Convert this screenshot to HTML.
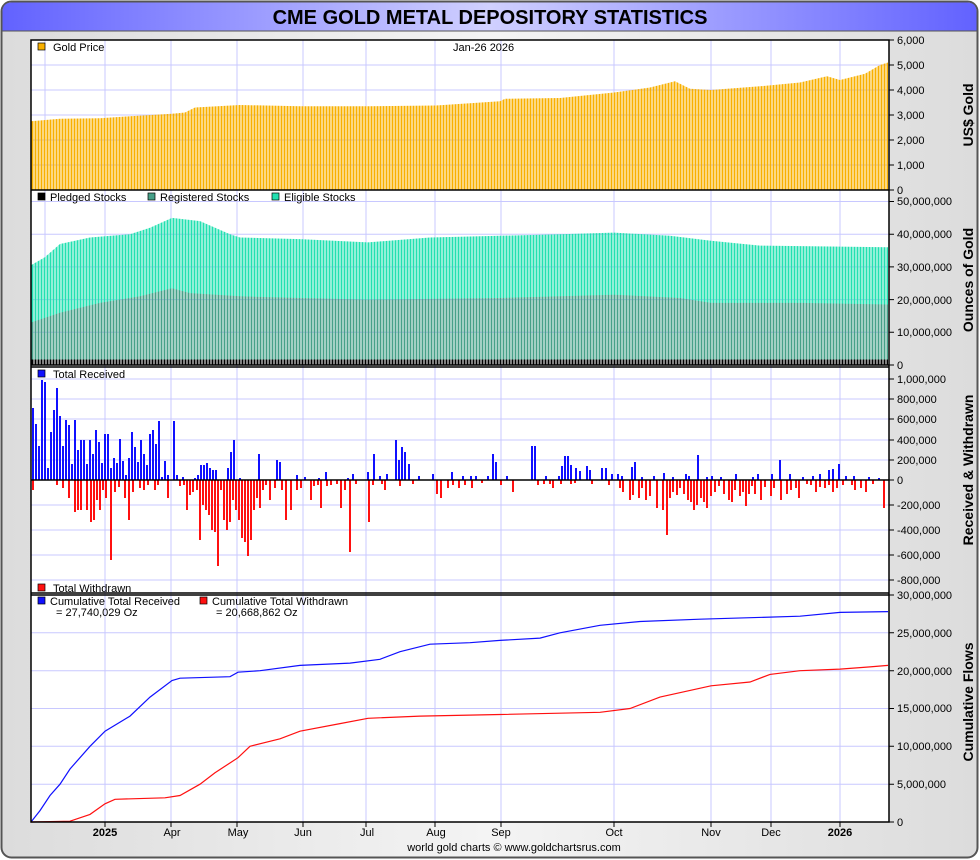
<!DOCTYPE html>
<html><head><meta charset="utf-8">
<style>
html,body{margin:0;padding:0;background:#fff;}
svg{display:block;font-family:"Liberation Sans",sans-serif;}
.t{font-size:11px;fill:#000;}
.ax text{font-size:11px;fill:#000;}
.at{font-size:14px;font-weight:bold;fill:#000;}
</style></head><body>
<svg width="980" height="860" viewBox="0 0 980 860" xmlns="http://www.w3.org/2000/svg">
<defs>
<linearGradient id="bg" x1="0" x2="1" y1="0" y2="0">
<stop offset="0" stop-color="#dcdcdc"/><stop offset="0.5" stop-color="#f4f4f4"/><stop offset="1" stop-color="#dcdcdc"/>
</linearGradient>
<linearGradient id="tb" x1="0" x2="1" y1="0" y2="0">
<stop offset="0" stop-color="#6262ff"/><stop offset="0.5" stop-color="#d0d0ff"/><stop offset="1" stop-color="#6262ff"/>
</linearGradient>
<pattern id="pg" x="31.5" y="0" width="3" height="10" patternUnits="userSpaceOnUse"><rect width="2" height="10" fill="#f8b000"/></pattern>
<pattern id="pe" x="31.5" y="0" width="3" height="10" patternUnits="userSpaceOnUse"><rect width="2" height="10" fill="#22e0b0"/></pattern>
<pattern id="pr" x="31.5" y="0" width="3" height="10" patternUnits="userSpaceOnUse"><rect width="2" height="10" fill="#46a088"/></pattern>
<pattern id="pk" x="31.5" y="0" width="3" height="10" patternUnits="userSpaceOnUse"><rect width="2" height="10" fill="#000"/></pattern>
</defs>
<rect x="1.5" y="1.5" width="976" height="856" rx="10" fill="url(#bg)" stroke="#555" stroke-width="2"/>
<path d="M2.5,31 L2.5,12 Q2.5,2.5 12,2.5 L967,2.5 Q976.5,2.5 976.5,12 L976.5,31 Z" fill="url(#tb)"/>
<line x1="2" y1="31" x2="977" y2="31" stroke="#555" stroke-width="1"/>
<text x="490" y="24" text-anchor="middle" style="font-size:20px;font-weight:bold">CME GOLD METAL DEPOSITORY STATISTICS</text>
<rect x="31" y="40" width="858" height="782" fill="#fff"/>
<g stroke="#c8c8ff" stroke-width="1">
<line x1="45" y1="40" x2="45" y2="365"/>
<line x1="105" y1="40" x2="105" y2="822"/><line x1="171" y1="40" x2="171" y2="822"/><line x1="237" y1="40" x2="237" y2="822"/>
<line x1="303" y1="40" x2="303" y2="822"/><line x1="366" y1="40" x2="366" y2="822"/><line x1="435" y1="40" x2="435" y2="822"/>
<line x1="501" y1="40" x2="501" y2="822"/><line x1="614" y1="40" x2="614" y2="822"/><line x1="711" y1="40" x2="711" y2="822"/>
<line x1="771" y1="40" x2="771" y2="822"/><line x1="840" y1="40" x2="840" y2="822"/>
<line x1="31" y1="165" x2="889" y2="165"/><line x1="31" y1="140" x2="889" y2="140"/><line x1="31" y1="115" x2="889" y2="115"/><line x1="31" y1="90" x2="889" y2="90"/><line x1="31" y1="65" x2="889" y2="65"/>
<line x1="31" y1="332.3" x2="889" y2="332.3"/><line x1="31" y1="299.6" x2="889" y2="299.6"/><line x1="31" y1="266.9" x2="889" y2="266.9"/><line x1="31" y1="234.2" x2="889" y2="234.2"/><line x1="31" y1="201.5" x2="889" y2="201.5"/>
<line x1="31" y1="379" x2="889" y2="379"/><line x1="31" y1="399" x2="889" y2="399"/><line x1="31" y1="419" x2="889" y2="419"/><line x1="31" y1="440" x2="889" y2="440"/><line x1="31" y1="460" x2="889" y2="460"/>
<line x1="31" y1="505" x2="889" y2="505"/><line x1="31" y1="530" x2="889" y2="530"/><line x1="31" y1="555" x2="889" y2="555"/><line x1="31" y1="580" x2="889" y2="580"/>
<line x1="31" y1="784.2" x2="889" y2="784.2"/><line x1="31" y1="746.3" x2="889" y2="746.3"/><line x1="31" y1="708.5" x2="889" y2="708.5"/><line x1="31" y1="670.7" x2="889" y2="670.7"/><line x1="31" y1="632.8" x2="889" y2="632.8"/>
</g>
<polygon fill="url(#pg)" points="31,190 31,121.25 60,118.75 100,118.25 130,116.25 172,113.75 185,112.5 195,107.5 240,105 300,106.25 368,106.25 436,105.5 500,101.25 505,98.75 560,98 614,92.5 650,87.5 675,81.25 690,88.75 711,90 760,86.25 800,82.5 827,76.25 840,80 865,73.75 880,65 888,62.5 888,190"/>
<polygon fill="url(#pe)" points="31,365 31,265.3 45,257.1 60,244 90,237.5 130,234.2 150,227.7 172,217.9 200,221.1 230,234.2 240,237.5 300,239.1 368,242.4 430,237.5 500,235.8 560,234.2 614,232.6 670,235.8 711,240.7 760,245.6 888,247.3 888,365"/>
<polygon fill="url(#pr)" points="31,365 31,322.5 60,312.7 100,302.9 140,296.3 172,288.2 190,293.1 240,296.3 300,298 368,299.6 500,298 614,294.7 680,298 711,302.9 800,302.9 888,304.5 888,365"/>
<rect x="31" y="359.5" width="857" height="5.5" fill="url(#pk)"/>
<path fill="#1010ff" d="M32,480v-72h2v72zM35,480v-56h2v56zM38,480v-34h2v34zM41,480v-100h2v100zM44,480v-98h2v98zM47,480v-12h2v12zM50,480v-48h2v48zM53,480v-70h2v70zM56,480v-92h2v92zM59,480v-64h2v64zM62,480v-34h2v34zM65,480v-60h2v60zM68,480v-55h2v55zM71,480v-16h2v16zM74,480v-60h2v60zM77,480v-30h2v30zM80,480v-40h2v40zM83,480v-40h2v40zM86,480v-16h2v16zM89,480v-40h2v40zM92,480v-26h2v26zM95,480v-50h2v50zM98,480v-38h2v38zM101,480v-17h2v17zM104,480v-46h2v46zM107,480v-46h2v46zM110,480v-12h2v12zM113,480v-22h2v22zM116,480v-17h2v17zM119,480v-41h2v41zM122,480v-19h2v19zM125,480v-5h2v5zM128,480v-22h2v22zM131,480v-48h2v48zM134,480v-33h2v33zM137,480v-18h2v18zM140,480v-40h2v40zM143,480v-26h2v26zM146,480v-15h2v15zM149,480v-46h2v46zM152,480v-50h2v50zM155,480v-36h2v36zM158,480v-59h2v59zM161,480v-3h2v3zM164,480v-19h2v19zM167,480v-5h2v5zM173,480v-59h2v59zM176,480v-5h2v5zM182,480v-3h2v3zM194,480v-2h2v2zM197,480v-5h2v5zM200,480v-15h2v15zM203,480v-15h2v15zM206,480v-17h2v17zM209,480v-12h2v12zM212,480v-10h2v10zM215,480v-10h2v10zM227,480v-12h2v12zM230,480v-28h2v28zM233,480v-40h2v40zM239,480v-2h2v2zM258,480v-26h2v26zM276,480v-20h2v20zM279,480v-18h2v18zM296,480v-5h2v5zM304,480v-3h2v3zM318,480v-2h2v2zM325,480v-8h2v8zM347,480v-2h2v2zM352,480v-6h2v6zM367,480v-8h2v8zM373,480v-26h2v26zM379,480v-4h2v4zM386,480v-6h2v6zM395,480v-40h2v40zM398,480v-20h2v20zM401,480v-33h2v33zM404,480v-28h2v28zM408,480v-16h2v16zM418,480v-4h2v4zM432,480v-6h2v6zM451,480v-8h2v8zM462,480v-4h2v4zM470,480v-4h2v4zM475,480v-4h2v4zM487,480v-4h2v4zM492,480v-26h2v26zM495,480v-18h2v18zM506,480v-4h2v4zM531,480v-34h2v34zM534,480v-34h2v34zM545,480v-4h2v4zM558,480v-4h2v4zM561,480v-14h2v14zM564,480v-24h2v24zM567,480v-24h2v24zM570,480v-15h2v15zM575,480v-12h2v12zM579,480v-9h2v9zM586,480v-14h2v14zM589,480v-10h2v10zM601,480v-12h2v12zM605,480v-12h2v12zM611,480v-6h2v6zM617,480v-6h2v6zM621,480v-4h2v4zM631,480v-13h2v13zM634,480v-18h2v18zM641,480v-3h2v3zM653,480v-4h2v4zM663,480v-7h2v7zM672,480v-3h2v3zM685,480v-6h2v6zM688,480v-4h2v4zM697,480v-25h2v25zM706,480v-3h2v3zM711,480v-4h2v4zM720,480v-3h2v3zM735,480v-6h2v6zM752,480v-3h2v3zM757,480v-6h2v6zM771,480v-6h2v6zM779,480v-20h2v20zM789,480v-6h2v6zM802,480v-3h2v3zM812,480v-4h2v4zM819,480v-6h2v6zM828,480v-10h2v10zM832,480v-11h2v11zM838,480v-16h2v16zM845,480v-4h2v4zM853,480v-4h2v4zM868,480v-3h2v3zM878,480v-2h2v2z"/>
<path fill="#ff1010" d="M32,480v10h2v-10zM56,480v5h2v-5zM62,480v8h2v-8zM68,480v18h2v-18zM74,480v32h2v-32zM77,480v30h2v-30zM80,480v30h2v-30zM86,480v30h2v-30zM90,480v42h2v-42zM93,480v40h2v-40zM96,480v20h2v-20zM99,480v30h2v-30zM102,480v10h2v-10zM105,480v18h2v-18zM110,480v80h2v-80zM114,480v12h2v-12zM118,480v7h2v-7zM124,480v18h2v-18zM128,480v40h2v-40zM132,480v12h2v-12zM139,480v8h2v-8zM143,480v10h2v-10zM147,480v5h2v-5zM154,480v10h2v-10zM157,480v5h2v-5zM167,480v18h2v-18zM179,480v6h2v-6zM183,480v5h2v-5zM186,480v30h2v-30zM189,480v15h2v-15zM192,480v12h2v-12zM196,480v10h2v-10zM199,480v60h2v-60zM202,480v25h2v-25zM205,480v30h2v-30zM208,480v35h2v-35zM211,480v50h2v-50zM214,480v52h2v-52zM217,480v86h2v-86zM220,480v10h2v-10zM223,480v40h2v-40zM226,480v50h2v-50zM229,480v42h2v-42zM232,480v20h2v-20zM235,480v30h2v-30zM238,480v40h2v-40zM241,480v58h2v-58zM244,480v62h2v-62zM247,480v76h2v-76zM250,480v60h2v-60zM253,480v30h2v-30zM256,480v18h2v-18zM259,480v28h2v-28zM262,480v10h2v-10zM265,480v5h2v-5zM269,480v20h2v-20zM274,480v8h2v-8zM281,480v10h2v-10zM285,480v40h2v-40zM290,480v30h2v-30zM296,480v10h2v-10zM300,480v8h2v-8zM310,480v20h2v-20zM313,480v6h2v-6zM317,480v5h2v-5zM320,480v28h2v-28zM326,480v6h2v-6zM330,480v5h2v-5zM336,480v4h2v-4zM340,480v28h2v-28zM344,480v10h2v-10zM349,480v72h2v-72zM355,480v4h2v-4zM368,480v42h2v-42zM372,480v5h2v-5zM381,480v4h2v-4zM384,480v10h2v-10zM399,480v6h2v-6zM412,480v4h2v-4zM436,480v14h2v-14zM440,480v18h2v-18zM447,480v8h2v-8zM452,480v5h2v-5zM458,480v8h2v-8zM464,480v5h2v-5zM471,480v8h2v-8zM481,480v3h2v-3zM500,480v5h2v-5zM512,480v12h2v-12zM537,480v5h2v-5zM543,480v4h2v-4zM549,480v4h2v-4zM552,480v8h2v-8zM560,480v4h2v-4zM570,480v4h2v-4zM574,480v3h2v-3zM591,480v4h2v-4zM608,480v5h2v-5zM619,480v8h2v-8zM622,480v12h2v-12zM629,480v20h2v-20zM632,480v15h2v-15zM638,480v18h2v-18zM641,480v8h2v-8zM645,480v20h2v-20zM649,480v16h2v-16zM656,480v28h2v-28zM662,480v30h2v-30zM666,480v55h2v-55zM669,480v18h2v-18zM672,480v12h2v-12zM676,480v15h2v-15zM679,480v8h2v-8zM683,480v14h2v-14zM687,480v20h2v-20zM690,480v22h2v-22zM693,480v30h2v-30zM696,480v25h2v-25zM700,480v18h2v-18zM703,480v22h2v-22zM706,480v28h2v-28zM710,480v16h2v-16zM714,480v12h2v-12zM718,480v6h2v-6zM723,480v14h2v-14zM728,480v20h2v-20zM731,480v22h2v-22zM734,480v10h2v-10zM739,480v16h2v-16zM742,480v12h2v-12zM745,480v26h2v-26zM748,480v14h2v-14zM751,480v6h2v-6zM754,480v14h2v-14zM760,480v20h2v-20zM764,480v7h2v-7zM770,480v16h2v-16zM773,480v8h2v-8zM780,480v20h2v-20zM786,480v14h2v-14zM790,480v10h2v-10zM795,480v8h2v-8zM798,480v18h2v-18zM806,480v4h2v-4zM810,480v5h2v-5zM815,480v12h2v-12zM819,480v7h2v-7zM824,480v8h2v-8zM828,480v5h2v-5zM832,480v12h2v-12zM836,480v8h2v-8zM842,480v5h2v-5zM851,480v5h2v-5zM854,480v10h2v-10zM860,480v8h2v-8zM865,480v12h2v-12zM872,480v4h2v-4zM883,480v28h2v-28z"/>
<polyline fill="none" stroke="#1010ff" stroke-width="1.2" points="31,822 40,810.6 50,795.5 60,784.2 70,769 90,746.3 105,731.2 130,716.1 150,697.1 172,680.5 180,678.2 230,676.7 238,672.2 260,670.7 300,665.4 350,663.1 380,659.3 400,651.7 430,644.2 470,642.7 500,640.4 540,638.1 560,632.8 600,625.3 640,621.5 700,619.2 800,616.2 840,612.4 888,611.6"/>
<polyline fill="none" stroke="#ff1010" stroke-width="1.2" points="31,822 70,821.2 90,814.4 105,803.8 115,799.3 165,797.8 180,795.5 200,784.2 215,772.8 238,757.7 250,746.3 280,738.8 300,731.2 340,723.6 368,718.3 420,716.1 500,714.5 600,712.3 630,708.5 660,697.1 711,685.8 750,682 770,674.4 800,670.7 840,669.1 870,666.9 888,665.4"/>
<g fill="none" stroke="#000" stroke-width="1.5">
<rect x="31" y="40" width="858" height="782"/>
<line x1="31" y1="190" x2="889" y2="190"/>
<line x1="31" y1="365" x2="889" y2="365"/>
<line x1="31" y1="367" x2="889" y2="367"/>
<line x1="31" y1="593" x2="889" y2="593"/>
<line x1="31" y1="595" x2="889" y2="595"/>
</g>
<line x1="31" y1="480" x2="889" y2="480" stroke="#000" stroke-width="1.5"/>
<g stroke="#000" stroke-width="1">
<path d="M889,190h5M889,165h5M889,140h5M889,115h5M889,90h5M889,65h5M889,40h5M889,365h5M889,332.3h5M889,299.6h5M889,266.9h5M889,234.2h5M889,201.5h5M889,379h5M889,399h5M889,419h5M889,440h5M889,460h5M889,480h5M889,505h5M889,530h5M889,555h5M889,580h5M889,822h5M889,784.2h5M889,746.3h5M889,708.5h5M889,670.7h5M889,632.8h5M889,595h5M105,822v5M171,822v5M237,822v5M303,822v5M366,822v5M435,822v5M501,822v5M614,822v5M711,822v5M771,822v5M840,822v5"/>
</g>
<g class="ax">
<text x="897" y="194">0</text><text x="897" y="169">1,000</text><text x="897" y="144">2,000</text><text x="897" y="119">3,000</text><text x="897" y="94">4,000</text><text x="897" y="69">5,000</text><text x="897" y="44">6,000</text>
<text x="897" y="369">0</text><text x="897" y="336">10,000,000</text><text x="897" y="304">20,000,000</text><text x="897" y="271">30,000,000</text><text x="897" y="238">40,000,000</text><text x="897" y="205">50,000,000</text>
<text x="897" y="383">1,000,000</text><text x="897" y="403">800,000</text><text x="897" y="423">600,000</text><text x="897" y="444">400,000</text><text x="897" y="464">200,000</text><text x="897" y="484">0</text><text x="897" y="509">-200,000</text><text x="897" y="534">-400,000</text><text x="897" y="559">-600,000</text><text x="897" y="584">-800,000</text>
<text x="897" y="826">0</text><text x="897" y="788">5,000,000</text><text x="897" y="750">10,000,000</text><text x="897" y="712">15,000,000</text><text x="897" y="675">20,000,000</text><text x="897" y="637">25,000,000</text><text x="897" y="599">30,000,000</text>
</g>
<rect x="38" y="43" width="7" height="7" fill="#f8b000" stroke="#000" stroke-width="0.7"/><text class="t" x="53" y="51">Gold Price</text>
<text class="t" x="453" y="51">Jan-26  2026</text>
<rect x="38" y="193" width="7" height="7" fill="#000" stroke="#000" stroke-width="0.7"/><text class="t" x="50" y="201">Pledged Stocks</text>
<rect x="148" y="193" width="7" height="7" fill="#46a088" stroke="#000" stroke-width="0.7"/><text class="t" x="160" y="201">Registered Stocks</text>
<rect x="272" y="193" width="7" height="7" fill="#22e0b0" stroke="#000" stroke-width="0.7"/><text class="t" x="284" y="201">Eligible Stocks</text>
<rect x="38" y="370" width="7" height="7" fill="#1010ff" stroke="#000" stroke-width="0.7"/><text class="t" x="53" y="378">Total Received</text>
<rect x="38" y="584" width="7" height="7" fill="#ff1010" stroke="#000" stroke-width="0.7"/><text class="t" x="53" y="592">Total Withdrawn</text>
<rect x="38" y="597" width="7" height="7" fill="#1010ff" stroke="#000" stroke-width="0.7"/><text class="t" x="50" y="605">Cumulative Total Received</text>
<text class="t" x="56" y="616">= 27,740,029 Oz</text>
<rect x="200" y="597" width="7" height="7" fill="#ff1010" stroke="#000" stroke-width="0.7"/><text class="t" x="212" y="605">Cumulative Total Withdrawn</text>
<text class="t" x="216" y="616">= 20,668,862 Oz</text>
<text class="at" transform="translate(973,115) rotate(-90)" text-anchor="middle">US$ Gold</text>
<text class="at" transform="translate(973,280) rotate(-90)" text-anchor="middle">Ounces of Gold</text>
<text class="at" transform="translate(973,470) rotate(-90)" text-anchor="middle">Received &amp; Withdrawn</text>
<text class="at" transform="translate(973,702) rotate(-90)" text-anchor="middle">Cumulative Flows</text>
<g class="ax" text-anchor="middle">
<text x="105" y="836" font-weight="bold">2025</text><text x="172" y="836">Apr</text><text x="238" y="836">May</text>
<text x="303" y="836">Jun</text><text x="367" y="836">Jul</text><text x="436" y="836">Aug</text>
<text x="501" y="836">Sep</text><text x="614" y="836">Oct</text><text x="711" y="836">Nov</text>
<text x="771" y="836">Dec</text><text x="840" y="836" font-weight="bold">2026</text>
</g>
<text class="t" x="514" y="851" text-anchor="middle">world gold charts © www.goldchartsrus.com</text>
</svg>
</body></html>
